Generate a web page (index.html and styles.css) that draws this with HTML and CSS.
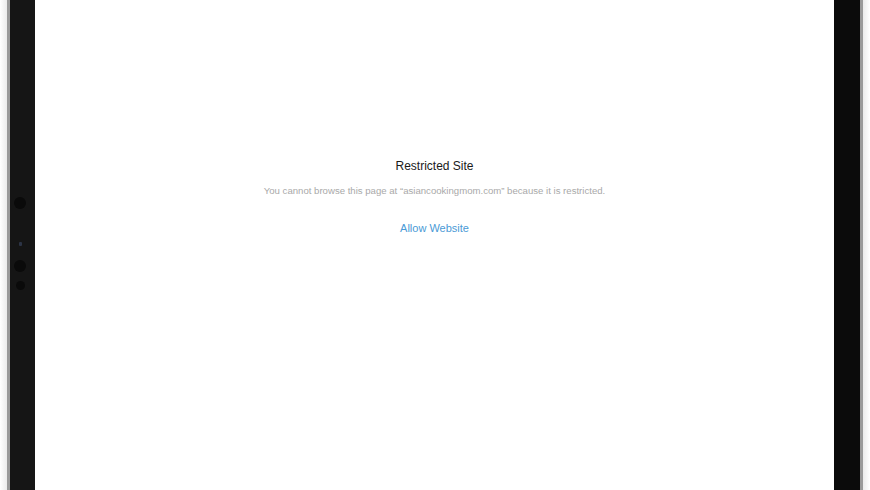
FILE: index.html
```html
<!DOCTYPE html>
<html>
<head>
<meta charset="utf-8">
<link rel="stylesheet" href="styles.css">
</head>
<body>
<div class="device">
  <div class="bezel bezel-left">
    <div class="edge-light"></div>
    <div class="edge-grey"></div>
    <div class="frame">
      <span class="dot dot-big"></span>
      <span class="dot dot-tiny"></span>
      <span class="dot dot-big dot-second"></span>
      <span class="dot dot-mid"></span>
    </div>
  </div>
  <main class="screen">
    <h1 class="title">Restricted Site</h1>
    <p class="message">You cannot browse this page at “asiancookingmom.com” because it is restricted.</p>
    <a class="allow">Allow Website</a>
  </main>
  <div class="bezel bezel-right">
    <div class="frame frame-right"></div>
    <div class="edge-grey"></div>
    <div class="edge-light"></div>
  </div>
</div>
</body>
</html>
```

FILE: styles.css
```css
html, body {
  margin: 0;
  padding: 0;
  width: 870px;
  height: 490px;
  overflow: hidden;
  background: #ffffff;
  font-family: "Liberation Sans", Arial, sans-serif;
}

.device {
  display: flex;
  width: 870px;
  height: 490px;
}

.bezel {
  display: flex;
  height: 100%;
}

.edge-light {
  width: 7px;
  background: linear-gradient(to right, #ffffff, #ebebeb);
}

.bezel-right .edge-light {
  background: linear-gradient(to left, #ffffff, #ebebeb);
}

.edge-grey {
  width: 3px;
  background: #9a9a9a;
}

.frame {
  width: 25px;
  background: #151515;
  display: flex;
  flex-direction: column;
  align-items: center;
  padding-top: 197px;
  padding-right: 5px;
  box-sizing: border-box;
}

.frame-right {
  width: 26px;
  background: #0b0b0b;
  padding: 0;
}

.dot {
  display: block;
  border-radius: 50%;
  background: #0a0a0a;
}

.dot-big {
  width: 12px;
  height: 12px;
}

.dot-tiny {
  width: 3px;
  height: 4px;
  border-radius: 1px;
  background: #2c3446;
  margin-top: 33px;
}

.dot-second {
  margin-top: 14px;
}

.dot-mid {
  width: 9px;
  height: 9px;
  margin-top: 9px;
}

.screen {
  flex: 1;
  background: #ffffff;
  display: flex;
  flex-direction: column;
  align-items: center;
  padding-top: 158px;
  box-sizing: border-box;
}

.title {
  margin: 0;
  font-size: 12px;
  font-weight: normal;
  color: #1a1a1a;
  line-height: 16px;
}

.message {
  margin: 11px 0 0;
  font-size: 9.6px;
  color: #a9a9a9;
  line-height: 12px;
}

.allow {
  margin-top: 24px;
  font-size: 11px;
  color: #4a9ad6;
  line-height: 14px;
}
```
